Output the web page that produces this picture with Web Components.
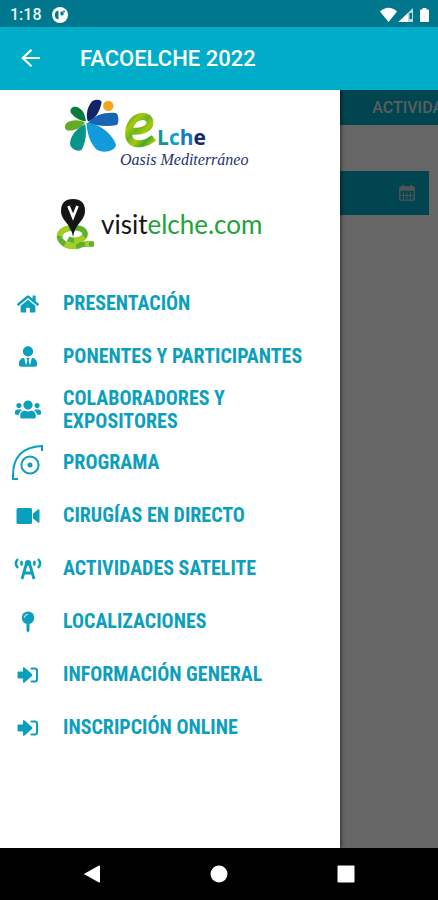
<!DOCTYPE html>
<html lang="es">
<head>
<meta charset="utf-8">
<meta name="viewport" content="width=device-width, initial-scale=1">
<title>FACOELCHE 2022</title>
<style>
  body {
    margin: 0;
    font-family: Roboto, "Liberation Sans", sans-serif;
    --primary: #00adc9;
    --primary-dark: #00778d;
    --menu-color: #0c9fbd;
  }
</style>
</head>
<body>
<app-shell>
  <status-bar slot="top" time="1:18"></status-bar>
  <app-header slot="top">FACOELCHE 2022</app-header>
  <program-page></program-page>
  <side-drawer slot="drawer">
    <elche-logo slot="logos"></elche-logo>
    <visit-logo slot="logos"></visit-logo>
    <menu-item icon="home">PRESENTACIÓN</menu-item>
    <menu-item icon="speaker">PONENTES Y PARTICIPANTES</menu-item>
    <menu-item icon="users">COLABORADORES Y EXPOSITORES</menu-item>
    <menu-item icon="eye">PROGRAMA</menu-item>
    <menu-item icon="video">CIRUGÍAS EN DIRECTO</menu-item>
    <menu-item icon="antenna">ACTIVIDADES SATELITE</menu-item>
    <menu-item icon="pin">LOCALIZACIONES</menu-item>
    <menu-item icon="enter">INFORMACIÓN GENERAL</menu-item>
    <menu-item icon="enter">INSCRIPCIÓN ONLINE</menu-item>
  </side-drawer>
  <system-nav slot="bottom"></system-nav>
</app-shell>

<script>
const ICONS = {
  home: `<svg width="22" height="20" viewBox="0 0 576 512"><path d="M280.37 148.26L96 300.11V464a16 16 0 0 0 16 16l112.06-.29a16 16 0 0 0 15.92-16V368a16 16 0 0 1 16-16h64a16 16 0 0 1 16 16v95.64a16 16 0 0 0 16 16.05L464 480a16 16 0 0 0 16-16V300L295.67 148.26a12.19 12.19 0 0 0-15.3 0zM571.6 251.47L488 182.56V44.05a12 12 0 0 0-12-12h-56a12 12 0 0 0-12 12v72.61L318.47 43a48 48 0 0 0-61 0L4.34 251.47a12 12 0 0 0-1.6 16.9l25.5 31A12 12 0 0 0 45.15 301l235.22-193.74a12.19 12.19 0 0 1 15.3 0L530.9 301a12 12 0 0 0 16.9-1.6l25.5-31a12 12 0 0 0-1.7-16.93z"/></svg>`,
  speaker: `<svg width="18" height="21" viewBox="0 0 448 512"><path d="M224 256c70.7 0 128-57.3 128-128S294.7 0 224 0 96 57.3 96 128s57.3 128 128 128zm95.8 32.6L272 480l-32-136 32-56h-96l32 56-32 136-47.8-191.4C56.9 292 0 350.3 0 422.4V464c0 26.5 21.5 48 48 48h352c26.5 0 48-21.5 48-48v-41.6c0-72.1-56.9-130.4-128.2-133.8z"/></svg>`,
  users: `<svg width="26" height="21" viewBox="0 0 640 512"><path d="M96 224c35.3 0 64-28.7 64-64s-28.7-64-64-64-64 28.7-64 64 28.7 64 64 64zm448 0c35.3 0 64-28.7 64-64s-28.7-64-64-64-64 28.7-64 64 28.7 64 64 64zm32 32h-64c-17.6 0-33.5 7.1-45.1 18.6 40.3 22.1 68.9 62 75.1 109.4h66c17.7 0 32-14.3 32-32v-32c0-35.3-28.7-64-64-64zm-256 0c61.9 0 112-50.1 112-112S381.9 32 320 32 208 82.1 208 144s50.1 112 112 112zm76.8 32h-8.3c-20.8 10-43.9 16-68.5 16s-47.6-6-68.5-16h-8.3C179.6 288 128 339.6 128 403.2V432c0 26.5 21.5 48 48 48h288c26.5 0 48-21.5 48-48v-28.8c0-63.6-51.6-115.2-115.2-115.2zm-223.7-13.4C161.5 263.1 145.6 256 128 256H64c-35.3 0-64 28.7-64 64v32c0 17.7 14.3 32 32 32h65.9c6.3-47.4 34.9-87.3 75.2-109.4z"/></svg>`,
  eye: `<svg width="34" height="36" viewBox="0 0 34 36" fill="none" stroke="currentColor" stroke-width="2"><path d="M7 34H2V30C2 13 11 2 31 1V6"/><circle cx="19" cy="20" r="8.600"/><circle cx="19" cy="20" r="2.500" fill="currentColor" stroke="none"/></svg>`,
  video: `<svg width="24" height="18" viewBox="0 0 24 18"><path d="M2 1h12.500Q16 1 16 2.500v13Q16 17 14.500 17H2Q.5 17 .5 15.500v-13Q.5 1 2 1zM17 6.500l5-4q1.500-.6 1.500.5v12q0 1.100-1.500.5l-5-4z"/></svg>`,
  antenna: `<svg width="28" height="22" viewBox="0 0 28 22" fill="none" stroke="currentColor"><path d="M8 21L12.600 5h2.800L20 21M10 15h8" stroke-width="2.800"/><circle cx="14" cy="5" r="3" fill="currentColor" stroke="none"/><path d="M8 3q-1 2.200 0 4.400M20 3q1 2.200 0 4.400M4 1Q-.3 5.500 4 10M24 1q4.300 4.500 0 9" stroke-width="2.500"/></svg>`,
  pin: `<svg width="14" height="22" viewBox="0 0 14 22"><circle cx="7" cy="6.800" r="6.300"/><path d="M5.500 13h3v6.500L7 21.800l-1.500-2.300z"/><path d="M3.300 6.700q.2-3 3.400-3.400" fill="none" stroke="#fff" stroke-width="1"/></svg>`,
  enter: `<svg width="22" height="18" viewBox="0 0 22 18"><path d="M1.500 5.500H6V2.200q0-1.800 1.500-.8l7.500 6.700q.8.900 0 1.800l-7.500 6.700Q6 17.600 6 15.800v-3.300H1.500Q.5 12.500.5 11.500v-5q0-1 1-1z"/><path d="M14.500 2.500h3.200q2.300 0 2.300 2.300v8.400q0 2.300-2.300 2.300h-3.200" fill="none" stroke="currentColor" stroke-width="2" stroke-linecap="round"/></svg>`
};

class AppShell extends HTMLElement {
  constructor() {
    super();
    this.attachShadow({ mode: "open" });
    this.shadowRoot.innerHTML = `
      <style>
        :host { display: flex; flex-direction: column; min-height: 100vh; }
        .stage { position: relative; flex: 1; display: flex; background: #fff; overflow: hidden; }
        .page { position: absolute; inset: 0; }
        .scrim { position: absolute; inset: 0; background: rgba(0, 0, 0, 0.6); }
        ::slotted([slot="drawer"]) { position: relative; width: 340px; max-width: 80%; }
      </style>
      <slot name="top"></slot>
      <div class="stage">
        <div class="page"><slot></slot></div>
        <div class="scrim"></div>
        <slot name="drawer"></slot>
      </div>
      <slot name="bottom"></slot>
    `;
  }
}

class StatusBar extends HTMLElement {
  constructor() {
    super();
    this.attachShadow({ mode: "open" });
    this.shadowRoot.innerHTML = `
      <style>
        :host {
          display: flex; align-items: center; gap: 10px; height: 27px; box-sizing: border-box;
          padding: 2px 8px 0 10px; background: var(--primary-dark); color: #e9f6f8;
          font-size: 16px; line-height: 20px; font-weight: 500;
        }
        .signals { margin-left: auto; display: flex; }
      </style>
      <span>${this.getAttribute("time")}</span>
      <svg width="16" height="16" viewBox="0 0 16 16"><circle cx="8" cy="8" r="8" fill="#fff"/><path d="M6.500 3.500a4.600 4.600 0 0 0 0 9z" fill="#00778d"/><path d="M8.500 4.500h1.200a2 2 0 0 1 0 4H8.500z" fill="#00778d"/><circle cx="12" cy="4.500" r="1" fill="#00778d"/></svg>
      <div class="signals">
        <svg width="50" height="16" viewBox="0 0 50 16" fill="#fff">
          <path d="M0 4.500Q8.500-3 17 4.500L8.500 15z"/>
          <path d="M33 1v14H18.500z" fill="#b9dbe1"/><path d="M28 6v9h-9.500z"/><path d="M29.500 6h2.500v6h-2.500z" fill="#00778d"/>
          <path d="M42.500 1h4v1.500h1.500q1 0 1 1v10.500q0 1-1 1h-7q-1 0-1-1V3.500q0-1 1-1h1.500z"/>
        </svg>
      </div>
    `;
  }
}

class AppHeader extends HTMLElement {
  constructor() {
    super();
    this.attachShadow({ mode: "open" });
    this.shadowRoot.innerHTML = `
      <style>
        :host { display: flex; align-items: center; gap: 36px; height: 63px; padding: 0 18px; background: var(--primary); color: #fff; }
        button { display: grid; place-items: center; width: 26px; height: 40px; padding: 0; border: 0; background: none; color: inherit; cursor: pointer; }
        h1 { margin: 0; font-size: 22px; line-height: 30px; font-weight: 500; }
      </style>
      <button type="button" aria-label="Volver">
        <svg width="20" height="20" viewBox="0 0 20 20" fill="none" stroke="currentColor" stroke-width="2.200"><path d="M19 9H2M10.500.800L1.800 9l8.700 8.200"/></svg>
      </button>
      <h1><slot></slot></h1>
    `;
  }
}

class ProgramPage extends HTMLElement {
  constructor() {
    super();
    this.attachShadow({ mode: "open" });
    this.shadowRoot.innerHTML = `
      <style>
        :host { display: block; overflow: hidden; }
        .tabs { display: flex; background: var(--primary); padding-left: 85%; }
        .tabs button { flex: none; padding: 0; border: 0; background: none; color: #dfeaec; font: 500 16px/35px Roboto, sans-serif; }
        .date { display: flex; align-items: center; justify-content: flex-end; width: calc(100% - 18px); height: 44px; margin: 46px 9px 0; padding: 0 14px; border: 0; box-sizing: border-box; background: var(--primary); color: #d5d5d5; }
      </style>
      <nav class="tabs"><button type="button">ACTIVIDADES</button></nav>
      <button class="date" type="button" aria-label="Fecha">
        <svg width="16" height="16" viewBox="0 0 16 16" fill="none" stroke="currentColor"><rect x=".8" y="2" width="14.400" height="13.200" rx="1" stroke-width="1.300"/><path d="M1 4h14" stroke-width="3.500"/><path d="M4 0v3M12 0v3" stroke-width="2"/><path d="M4.500 7v7M8 7v7M11.500 7v7M2 10.500h12" stroke-width=".9"/></svg>
      </button>
    `;
  }
}

class SideDrawer extends HTMLElement {
  constructor() {
    super();
    this.attachShadow({ mode: "open" });
    this.shadowRoot.innerHTML = `
      <style>
        :host { display: block; background: #fff; box-shadow: 1px 0 4px rgba(0, 0, 0, 0.6); }
        .logos { display: flex; flex-direction: column; gap: 26px; padding: 8px 48px 25px; }
        nav { display: flex; flex-direction: column; }
      </style>
      <div class="logos"><slot name="logos"></slot></div>
      <nav><slot></slot></nav>
    `;
  }
}

class ElcheLogo extends HTMLElement {
  constructor() {
    super();
    this.attachShadow({ mode: "open" });
    this.shadowRoot.innerHTML = `
      <style>
        :host { display: block; height: 72px; }
        svg { display: block; overflow: visible; }
        text { font-family: "Open Sans", sans-serif; font-weight: 700; }
        .tagline { font-family: "Liberation Serif", serif; font-style: italic; font-weight: 400; }
      </style>
      <svg width="220" height="72" viewBox="48 98 220 72" role="img" aria-label="Elche Oasis Mediterráneo">
        <defs>
          <linearGradient id="e" x2="1" y2="1">
            <stop offset="0" stop-color="#4fa52c"/><stop offset=".2" stop-color="#a6c90b"/><stop offset=".4" stop-color="#6db422"/>
            <stop offset=".6" stop-color="#a6c90b"/><stop offset=".8" stop-color="#4aa82d"/><stop offset="1" stop-color="#c3d009"/>
          </linearGradient>
        </defs>
        <path d="M86 121C82 122 73 117 70.500 112C70 107 75 105.500 79 108C84 111 85 116 86 121z" fill="#087c3a"/>
        <path d="M88 121.500C85 115 88 105 92.500 101C96 99 102 99 101.500 103C100 111 95 120 88 121.500z" fill="#142469"/>
        <circle cx="108.300" cy="105.900" r="5.200" fill="#f7a51c"/>
        <path d="M88 123C95 114 106 112 116 113C119 115 119 122 117 125C108 127 96 126 88 123z" fill="#1865b5"/>
        <path d="M85 122.500C79 119 70 120 66 123.500C64 127 65 130 68 130.500C75 131 81 128 85 122.500z" fill="#64ab25"/>
        <path d="M85 124C77 128 70 136 70 144C71 149 77 152 81.500 150C86 142 87 132 85 124z" fill="#07948d"/>
        <path d="M86.500 123C98 123 112 133 116 145C115 149 111 151 107 151.500C103 152 98 151 96 149C90 143 87 133 86.500 123z" fill="#119bdc"/>
        <path d="M131 131C139 132 150 130 150 122C149 115 139 115 134 120C128 126 127 136 131 141C136 146 146 144 154 138" fill="none" stroke="url(#e)" stroke-width="7"/>
        <text x="157" y="145" font-size="21"><tspan fill="#13968b">L</tspan><tspan fill="#0e9fd6">c</tspan><tspan fill="#1778bd">h</tspan><tspan fill="#17286d">e</tspan></text>
        <text class="tagline" x="120" y="165" font-size="16" fill="#26336e">Oasis Mediterráneo</text>
      </svg>
    `;
  }
}

class VisitLogo extends HTMLElement {
  constructor() {
    super();
    this.attachShadow({ mode: "open" });
    this.shadowRoot.innerHTML = `
      <style>
        :host { display: flex; align-items: center; gap: 6px; height: 56px; padding-left: 8px; }
        svg { flex: none; }
        span { font-family: Lato, sans-serif; font-size: 26px; line-height: 32px; color: #151515; white-space: nowrap; }
        b { font-weight: 400; color: #22a23a; }
      </style>
      <svg width="39" height="52" viewBox="0 0 39 52">
        <g fill="none" stroke-width="5.500">
          <path d="M12 41C18 44 30 42 29 35C28 31 22 29 15 30C6 31 2 36 4 41C7 47 14 49 22 48C26 45 30 46 38 46" stroke="#5cb22b"/>
          <path d="M13 30.300C8 31 4 34 3.500 38M9 46C12 48 16 48.600 20 48.300M28 38.500C26 41 22 42.500 18 42.500M29 45.700L33 46" stroke="#a6ce20"/>
        </g>
        <path d="M17 39Q16 31 9 23Q5 18 5 13Q5 1 17 1T29 13Q29 18 25 23Q18 31 17 39z" fill="#151515"/>
        <path d="M12.500 8L17 19l4.500-11" fill="none" stroke="#fff" stroke-width="2.800"/>
      </svg>
      <span>visit<b>elche.com</b></span>
    `;
  }
}

class MenuItem extends HTMLElement {
  constructor() {
    super();
    this.attachShadow({ mode: "open" });
    this.shadowRoot.innerHTML = `
      <style>
        :host { display: block; }
        a {
          display: grid; grid-template-columns: 39px 1fr; gap: 16px; align-items: center;
          min-height: 53px; padding: 0 24px 0 8px; box-sizing: border-box;
          color: var(--menu-color); text-decoration: none;
          font-family: "Roboto Condensed", "Liberation Sans Narrow", Roboto, sans-serif; font-size: 20px; line-height: 23px; font-weight: 700;
        }
        .icon { display: grid; place-items: center; }
        svg { display: block; fill: currentColor; }
        svg[fill="none"] { fill: none; }
      </style>
      <a href="#"><span class="icon">${ICONS[this.getAttribute("icon")]}</span><span><slot></slot></span></a>
    `;
  }
}

class SystemNav extends HTMLElement {
  constructor() {
    super();
    this.attachShadow({ mode: "open" });
    this.shadowRoot.innerHTML = `
      <style>
        :host { display: grid; grid-template-columns: repeat(3, 1fr); place-items: center; height: 52px; padding: 0 29px; background: #000; }
        button { display: grid; place-items: center; width: 22px; height: 40px; padding: 0; border: 0; background: none; }
        svg { fill: #fff; }
      </style>
      <button type="button" aria-label="Atrás"><svg width="18" height="18" viewBox="0 0 18 18"><path d="M.8 9L16 .6q1-.4 1 .6v15.600q0 1-1 .6z"/></svg></button>
      <button type="button" aria-label="Inicio"><svg width="18" height="18" viewBox="0 0 18 18"><circle cx="9" cy="9" r="8.500"/></svg></button>
      <button type="button" aria-label="Recientes"><svg width="18" height="18" viewBox="0 0 18 18"><rect x=".5" y=".5" width="17" height="17" rx="1"/></svg></button>
    `;
  }
}

customElements.define("app-shell", AppShell);
customElements.define("status-bar", StatusBar);
customElements.define("app-header", AppHeader);
customElements.define("program-page", ProgramPage);
customElements.define("side-drawer", SideDrawer);
customElements.define("elche-logo", ElcheLogo);
customElements.define("visit-logo", VisitLogo);
customElements.define("menu-item", MenuItem);
customElements.define("system-nav", SystemNav);
</script>
</body>
</html>
